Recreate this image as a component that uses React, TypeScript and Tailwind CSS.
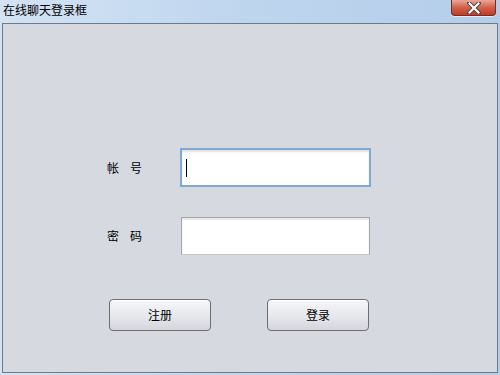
export default function App() {
  const font = { fontFamily: '"Noto Sans CJK SC", "Noto Sans", sans-serif' };
  return (
    <div
      className="w-[500px] h-[375px] flex flex-col bg-gradient-to-r from-[#d3e3f4] via-[#bed5ee] to-[#b4cde9] overflow-hidden"
      style={font}
    >
      <div className="h-[23px] flex items-start justify-between">
        <div className="pl-[3px] pt-[2px] text-[12px] leading-[16px] text-black">在线聊天登录框</div>
        <div className="mr-[4px] w-[45px] h-[16px] rounded-b-[4px] border border-t-0 border-[#7a2a1e] bg-gradient-to-b from-[#e9a697] via-[#d2604a] to-[#c23b25] flex items-center justify-center shadow-[0_1px_0_rgba(255,255,255,0.6)]">
          <svg width="14" height="12" viewBox="0 0 14 12">
            <path d="M2 1 L12 11 M12 1 L2 11" stroke="#4a4a4a" strokeWidth="4" strokeLinecap="square" />
            <path d="M2.5 1.5 L11.5 10.5 M11.5 1.5 L2.5 10.5" stroke="#ffffff" strokeWidth="2" strokeLinecap="square" />
          </svg>
        </div>
      </div>
      <div className="mx-[2px] h-[350px] border border-[#6e7a88] bg-[#d6d9e0] flex flex-col">
        <div className="pt-[124px] pl-[104px] flex items-center">
          <div className="w-[35px] flex justify-between text-[12px] leading-[16px] text-black">
            <span>帐</span>
            <span>号</span>
          </div>
          <div className="ml-[38px] w-[191px] h-[39px] border-2 border-[#7fa8d3] bg-white shadow-[inset_0_2px_2px_rgba(0,0,0,0.12)] flex items-center pl-[4px]">
            <div className="w-[1px] h-[18px] bg-black" />
          </div>
        </div>
        <div className="pt-[30px] pl-[104px] flex items-center">
          <div className="w-[35px] flex justify-between text-[12px] leading-[16px] text-black">
            <span>密</span>
            <span>码</span>
          </div>
          <div className="ml-[39px] w-[189px] h-[38px] border border-[#a5a5a5] border-b-[#c8c8c8] bg-white shadow-[inset_0_2px_2px_rgba(0,0,0,0.1)]" />
        </div>
        <div className="pt-[44px] pl-[106px] flex gap-[56px]">
          <button className="w-[102px] h-[32px] rounded-[4px] border border-[#6f6f6f] bg-gradient-to-b from-[#f6f6f8] via-[#e8e9ed] to-[#d4d6dc] text-[12px] text-black shadow-[inset_0_1px_0_#ffffff]" style={font}>
            注册
          </button>
          <button className="w-[102px] h-[32px] rounded-[4px] border border-[#6f6f6f] bg-gradient-to-b from-[#f6f6f8] via-[#e8e9ed] to-[#d4d6dc] text-[12px] text-black shadow-[inset_0_1px_0_#ffffff]" style={font}>
            登录
          </button>
        </div>
      </div>
    </div>
  );
}
